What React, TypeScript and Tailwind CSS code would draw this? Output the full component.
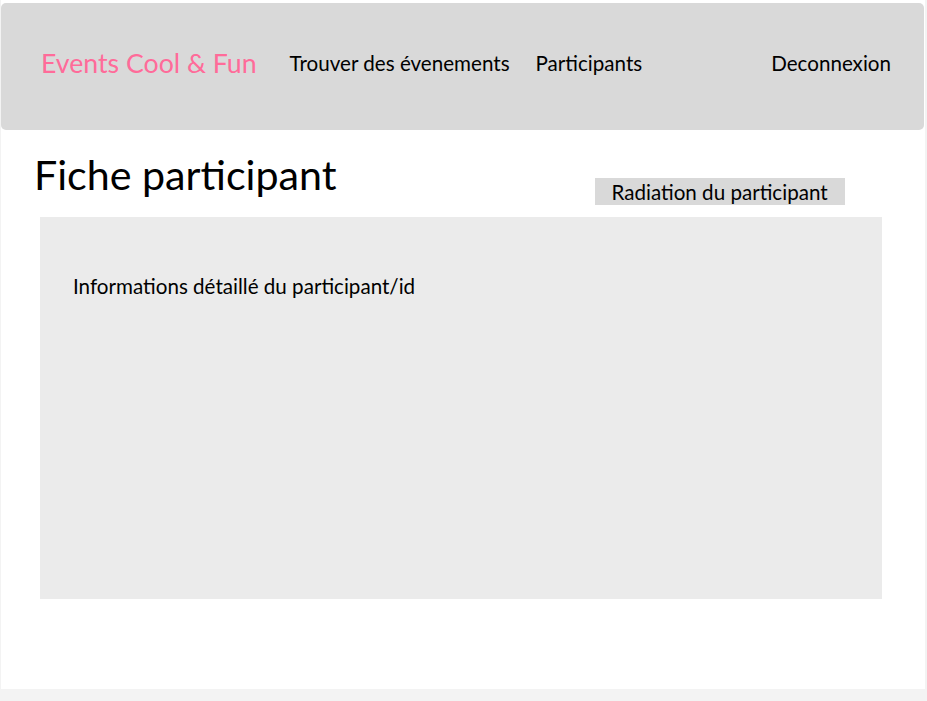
export default function App() {
  return (
    <div
      className="w-[927px] h-[701px] bg-[#f3f3f3] overflow-hidden"
      style={{ fontFamily: "Lato, 'Noto Sans', sans-serif" }}
    >
      <div className="ml-px w-[924px] h-[689px] bg-white flex flex-col">
        <header className="mt-[3px] h-[127px] w-[923px] bg-[#d9d9d9] rounded-[5px] flex items-center pb-[7px]">
          <div className="ml-[40px] text-[26.7px] text-[#ff6b99] leading-none">Events Cool &amp; Fun</div>
          <nav className="ml-[33px] flex items-center gap-[26px] text-[20.6px] text-black leading-none">
            <span>Trouver des évenements</span>
            <span>Participants</span>
          </nav>
          <div className="ml-auto mr-[33px] text-[20.6px] text-black leading-none">Deconnexion</div>
        </header>
        <div className="flex items-start">
          <h1 className="ml-[33px] mt-[24px] text-[41.2px] leading-none text-black">Fiche participant</h1>
          <button className="ml-[258px] mt-[48px] w-[250px] h-[27px] bg-[#d9d9d9] text-[20.6px] leading-none text-black flex items-center justify-center pt-[2px]">
            Radiation du participant
          </button>
        </div>
        <section className="ml-[39px] mt-[12px] w-[842px] h-[382px] bg-[#ebebeb] pt-[59px] pl-[33px]">
          <p className="text-[20.6px] leading-none text-black">Informations détaillé du participant/id</p>
        </section>
      </div>
    </div>
  );
}
